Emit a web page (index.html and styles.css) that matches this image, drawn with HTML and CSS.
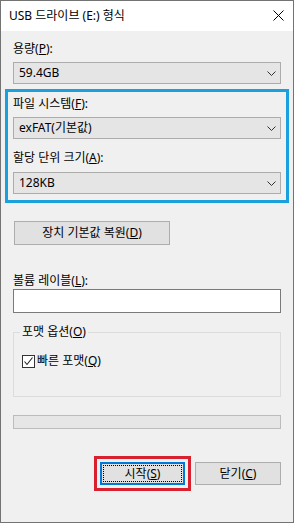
FILE: index.html
```html
<!DOCTYPE html>
<html lang="ko">
<head>
<meta charset="UTF-8">
<meta name="viewport" content="width=device-width, initial-scale=1.0">
<title>USB 드라이브 (E:) 형식</title>
<link rel="stylesheet" href="styles.css">
</head>
<body>
  <div class="dialog">
    <header class="dialog__titlebar">
      <span class="dialog__title">USB 드라이브 (E:) 형식</span>
      <svg class="dialog__close" width="11" height="11" viewBox="0 0 11 11">
        <path d="M0.5 0.5 L10.5 10.5 M10.5 0.5 L0.5 10.5" stroke="#000" stroke-width="1" fill="none"/>
      </svg>
    </header>

    <main class="dialog__body">
      <div class="field-label">용량(<u>P</u>):</div>
      <div class="combo">
        <span>59.4GB</span>
        <svg class="combo__arrow" width="9" height="5" viewBox="0 0 9 5"><polyline points="0.5,0.5 4.5,4.5 8.5,0.5" fill="none" stroke="#333" stroke-width="1"/></svg>
      </div>

      <section class="highlight">
        <div class="field-label">파일 시스템(<u>F</u>):</div>
        <div class="combo">
          <span>exFAT(기본값)</span>
          <svg class="combo__arrow" width="9" height="5" viewBox="0 0 9 5"><polyline points="0.5,0.5 4.5,4.5 8.5,0.5" fill="none" stroke="#333" stroke-width="1"/></svg>
        </div>
        <div class="field-label field-label--gap">할당 단위 크기(<u>A</u>):</div>
        <div class="combo combo--gap">
          <span>128KB</span>
          <svg class="combo__arrow" width="9" height="5" viewBox="0 0 9 5"><polyline points="0.5,0.5 4.5,4.5 8.5,0.5" fill="none" stroke="#333" stroke-width="1"/></svg>
        </div>
      </section>

      <button class="btn btn--reset" type="button">장치 기본값 복원(<u>D</u>)</button>

      <div class="field-label field-label--volume">볼륨 레이블(<u>L</u>):</div>
      <input class="text-input" type="text" value="">

      <fieldset class="options">
        <legend class="options__legend">포맷 옵션(<u>O</u>)</legend>
        <label class="check">
          <span class="check__box">
            <svg width="11" height="11" viewBox="0 0 11 11"><polyline points="1.5,5.5 4,8.5 9.5,1.5" fill="none" stroke="#222" stroke-width="1.1"/></svg>
          </span>
          <span class="check__text">빠른 포맷(<u>Q</u>)</span>
        </label>
      </fieldset>

      <div class="progress"></div>

      <div class="actions">
        <div class="mark">
          <button class="btn btn--default" type="button">시작(<u>S</u>)</button>
        </div>
        <button class="btn btn--close" type="button">닫기(<u>C</u>)</button>
      </div>
    </main>
  </div>
</body>
</html>
```

FILE: styles.css
```css
*{
  box-sizing: border-box;
}

body{
  margin: 0;
  font-family: "Noto Sans", "Noto Sans CJK KR", sans-serif;
  font-size: 12px;
  color: #000;
}

.dialog{
  width: 294px;
  height: 523px;
  border: 1px solid #737373;
  background-color: #f0f0f0;
  display: flex;
  flex-direction: column;
}

.dialog__titlebar{
  height: 30px;
  background-color: #fff;
  display: flex;
  align-items: center;
  justify-content: space-between;
  padding: 0 9px 1px 8px;
}

.dialog__title{
  line-height: 16px;
}

.dialog__body{
  padding: 10px 12px 0 12px;
}

.field-label{
  line-height: 16px;
}

.field-label--gap{
  margin-top: 11px;
}

.field-label--volume{
  margin-top: 28px;
}

.combo{
  height: 22px;
  margin-top: 5px;
  border: 1px solid #acacac;
  background-color: #e5e5e5;
  display: flex;
  align-items: center;
  justify-content: space-between;
  padding: 0 4px 0 5px;
  line-height: 16px;
}

.combo--gap{
  margin-top: 6px;
}

.highlight{
  margin: 5px -8px 0 -8px;
  border: 3px solid #1aa0dc;
  padding: 4px 5px 6px 5px;
}

.btn{
  font: inherit;
  color: #000;
  height: 23px;
  background-color: #e1e1e1;
  border: 1px solid #adadad;
  padding: 0;
  line-height: 16px;
}

.btn--reset{
  display: block;
  width: 156px;
  height: 24px;
  margin: 18px 0 0 1px;
}

.text-input{
  display: block;
  width: 100%;
  height: 24px;
  border: 1px solid #7a7a7a;
  background-color: #fff;
  margin: 0;
}

.options{
  margin: 11px 0 0 0;
  border: 1px solid #dcdcdc;
  padding: 13px 0 27px 8px;
}

.options__legend{
  padding: 0 2px;
  margin-left: -2px;
  line-height: 16px;
}

.check{
  display: flex;
  align-items: center;
  gap: 2px;
  line-height: 16px;
}

.check__box{
  width: 13px;
  height: 13px;
  border: 1px solid #333;
  background-color: #fff;
  display: flex;
}

.progress{
  height: 14px;
  margin-top: 18px;
  border: 1px solid #bcbcbc;
  background-color: #e6e6e6;
}

.actions{
  margin-top: 27px;
  display: flex;
  justify-content: flex-end;
  align-items: center;
  gap: 4px;
}

.mark{
  border: 3px solid #d8202e;
  padding: 3px;
  display: flex;
}

.btn--default{
  width: 85px;
  border: 2px solid #0078d7;
  outline: 1px dotted #000;
  outline-offset: -4px;
}

.btn--close{
  width: 86px;
}
```
